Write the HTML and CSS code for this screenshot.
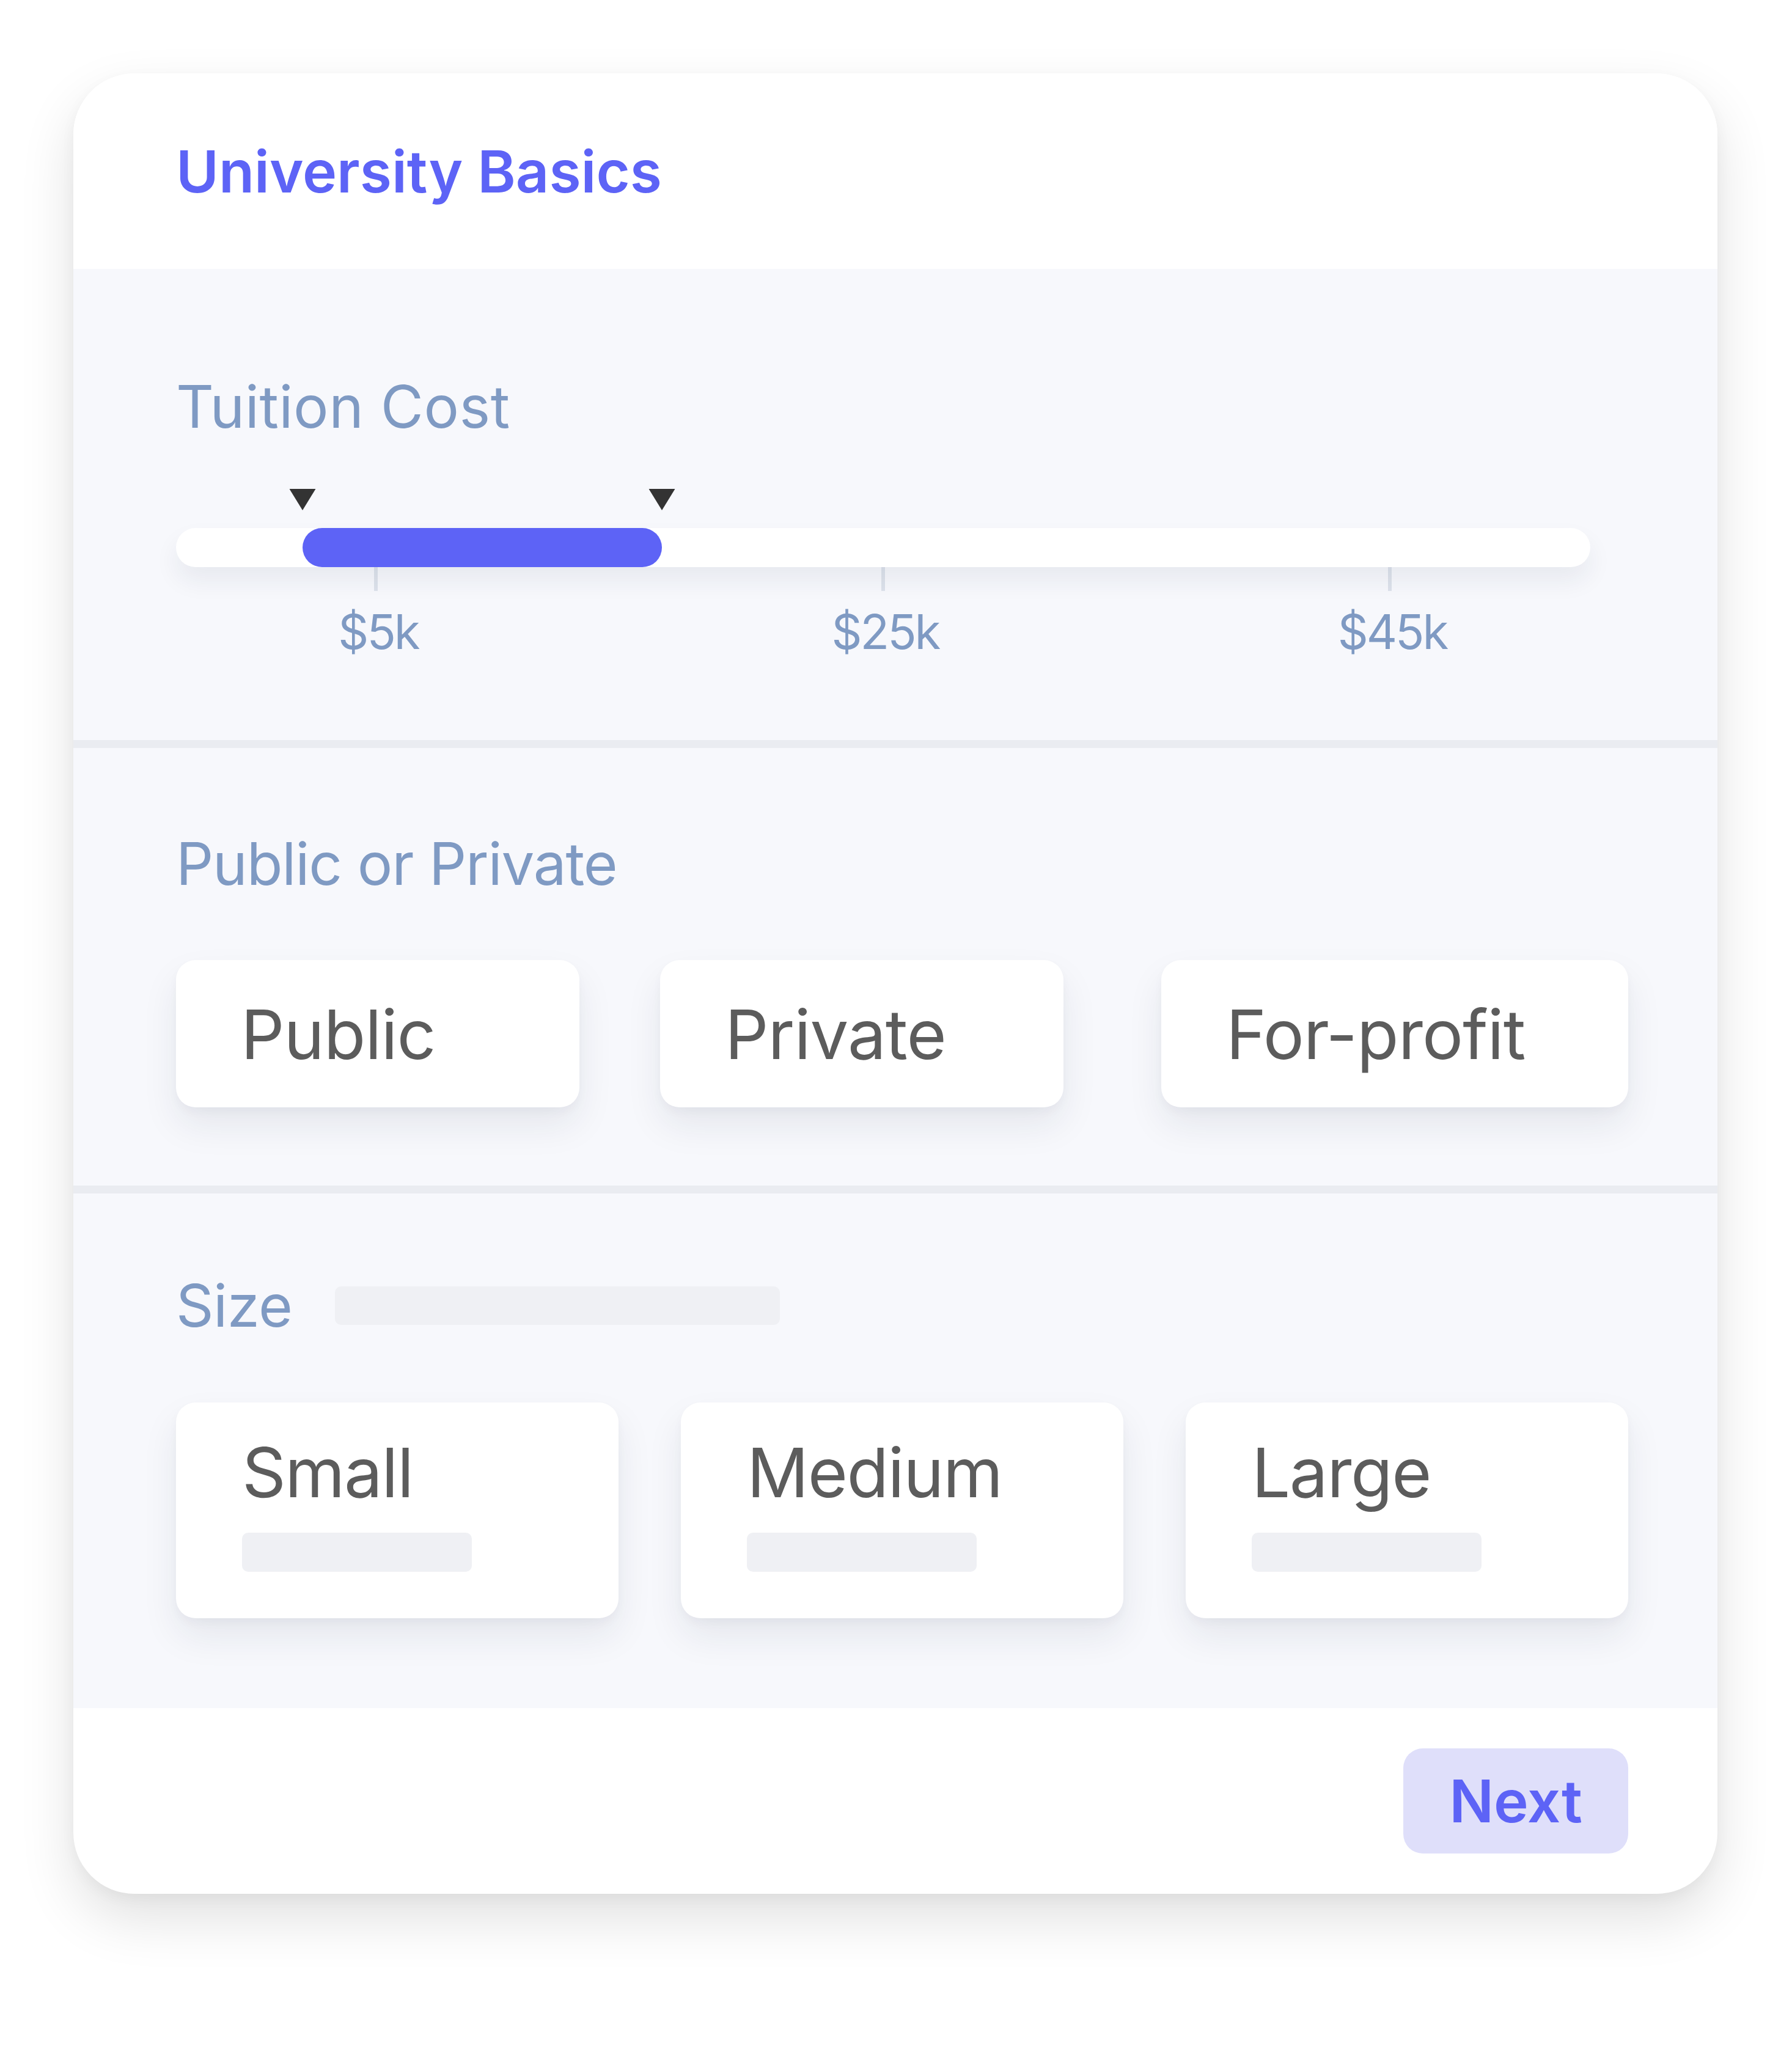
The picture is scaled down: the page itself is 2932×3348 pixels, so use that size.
FILE: index.html
```html
<!DOCTYPE html>
<html lang="en">
<head>
<meta charset="utf-8">
<title>University Basics</title>
<link rel="stylesheet" href="styles.css">
</head>
<body>
<div class="page">
  <div class="card">
    <header class="card-header">
      <h1 class="title">University Basics</h1>
    </header>
    <div class="card-body">
      <section class="section section-tuition">
        <h2 class="label label-tuition">Tuition Cost</h2>
        <div class="slider">
          <span class="handle" style="left:8.95%"><svg viewBox="0 0 43 35" width="43" height="35"><polygon points="0,0 43,0 21.5,35" fill="#333333"/></svg></span>
          <span class="handle" style="left:34.36%"><svg viewBox="0 0 43 35" width="43" height="35"><polygon points="0,0 43,0 21.5,35" fill="#333333"/></svg></span>
          <div class="track">
            <div class="fill" style="left:8.95%;width:25.41%"></div>
          </div>
          <div class="ticks">
            <div class="tick"><span class="tick-line"></span><span class="tick-label">$5k</span></div>
            <div class="tick"><span class="tick-line"></span><span class="tick-label">$25k</span></div>
            <div class="tick"><span class="tick-line"></span><span class="tick-label">$45k</span></div>
          </div>
        </div>
      </section>
      <section class="section section-type">
        <h2 class="label label-type">Public or Private</h2>
        <div class="options">
          <div class="option option-public">Public</div>
          <div class="option option-private">Private</div>
          <div class="option option-profit">For-profit</div>
        </div>
      </section>
      <section class="section section-size">
        <div class="label-row">
          <h2 class="label">Size</h2>
          <span class="placeholder placeholder-wide"></span>
        </div>
        <div class="size-grid">
          <div class="size-card">
            <span class="size-name">Small</span>
            <span class="placeholder placeholder-small"></span>
          </div>
          <div class="size-card">
            <span class="size-name">Medium</span>
            <span class="placeholder placeholder-small"></span>
          </div>
          <div class="size-card">
            <span class="size-name">Large</span>
            <span class="placeholder placeholder-small"></span>
          </div>
        </div>
      </section>
    </div>
    <footer class="card-footer">
      <button class="next-btn" type="button">Next</button>
    </footer>
  </div>
</div>
</body>
</html>
```

FILE: styles.css
```css
* {
  box-sizing: border-box;
}

html, body {
  margin: 0;
  padding: 0;
  background: #ffffff;
}

body {
  font-family: Inter, "Noto Sans", "Liberation Sans", sans-serif;
}

.page {
  padding: 120px 0 200px 120px;
}

.card {
  width: 2690px;
  background: #ffffff;
  border-radius: 100px;
  overflow: hidden;
  box-shadow: 0 40px 90px rgba(0, 0, 0, 0.12), 0 8px 24px rgba(0, 0, 0, 0.04);
}

.card-header {
  height: 320px;
  padding-left: 168px;
  display: flex;
  align-items: center;
  background: #ffffff;
}

.title {
  margin: 0;
  font-size: 95px;
  line-height: 1;
  font-weight: 600;
  color: #5d63f6;
  letter-spacing: 0;
}

.card-body {
  background: #f7f8fc;
}

.section {
  padding-left: 168px;
  padding-right: 146px;
}

.section + .section {
  border-top: 13px solid #eaecf1;
}

.label {
  margin: 0;
  font-size: 96px;
  line-height: 1;
  font-weight: 400;
  color: #7f9ac3;
  letter-spacing: -0.5px;
}

.label-tuition {
  letter-spacing: 0.5px;
}

.label-type {
  letter-spacing: -1.2px;
}

/* Tuition */
.section-tuition {
  padding-top: 177px;
  padding-bottom: 138px;
}

.slider {
  position: relative;
  width: 2314px;
  margin-top: 87px;
  padding-top: 64px;
}

.handle {
  position: absolute;
  top: 0;
  width: 43px;
  height: 35px;
  transform: translateX(-50%);
  display: block;
}

.handle svg {
  display: block;
}

.track {
  position: relative;
  height: 64px;
  border-radius: 32px;
  background: #ffffff;
  box-shadow: 0 22px 40px rgba(30, 40, 70, 0.07);
}

.fill {
  position: absolute;
  top: 0;
  bottom: 0;
  border-radius: 32px;
  background: #5d63f6;
}

.ticks {
  display: flex;
  justify-content: space-between;
  padding: 0 228px 0 227px;
}

.tick {
  width: 200px;
  display: flex;
  flex-direction: column;
  align-items: center;
}

.tick-line {
  display: block;
  width: 6px;
  height: 39px;
  background: #dde2eb;
}

.tick-label {
  margin-top: 28px;
  margin-left: 8px;
  font-size: 78px;
  line-height: 1;
  color: #7f9ac3;
  letter-spacing: -3px;
}

/* Type */
.section-type {
  padding-top: 141px;
  padding-bottom: 128px;
}

.options {
  display: flex;
  margin-top: 110px;
}

.option {
  height: 241px;
  display: flex;
  align-items: center;
  padding-left: 106px;
  background: #ffffff;
  border-radius: 32px;
  font-size: 112px;
  line-height: 1;
  color: #5c5c5c;
  letter-spacing: -1px;
  box-shadow: 0 30px 60px rgba(30, 40, 70, 0.08), 0 8px 16px rgba(30, 40, 70, 0.03);
}

.option-public {
  width: 660px;
}

.option-private {
  width: 660px;
  margin-left: 132px;
}

.option-profit {
  width: 764px;
  margin-left: 160px;
}

/* Size */
.section-size {
  padding-top: 135px;
  padding-bottom: 147px;
}

.label-row {
  display: flex;
  align-items: center;
  gap: 70px;
}

.placeholder {
  display: block;
  background: #eff0f4;
  border-radius: 10px;
}

.placeholder-wide {
  width: 728px;
  height: 63px;
}

.size-grid {
  display: grid;
  grid-template-columns: repeat(3, 724px);
  column-gap: 102px;
  margin-top: 111px;
}

.size-card {
  height: 353px;
  padding: 58px 0 0 108px;
  background: #ffffff;
  border-radius: 32px;
  display: flex;
  flex-direction: column;
  align-items: flex-start;
  box-shadow: 0 30px 60px rgba(30, 40, 70, 0.08), 0 8px 16px rgba(30, 40, 70, 0.03);
}

.size-name {
  font-size: 112px;
  line-height: 1;
  color: #5c5c5c;
  letter-spacing: -1.5px;
}

.placeholder-small {
  width: 376px;
  height: 64px;
  margin-top: 43px;
}

/* Footer */
.card-footer {
  height: 304px;
  display: flex;
  align-items: center;
  justify-content: flex-end;
  padding-right: 146px;
}

.next-btn {
  width: 368px;
  height: 172px;
  border: 0;
  border-radius: 32px;
  background: #dfdffa;
  color: #5d63f6;
  font-family: Inter, "Noto Sans", "Liberation Sans", sans-serif;
  font-size: 96px;
  font-weight: 600;
  line-height: 1;
  padding: 0;
  cursor: pointer;
}
```
